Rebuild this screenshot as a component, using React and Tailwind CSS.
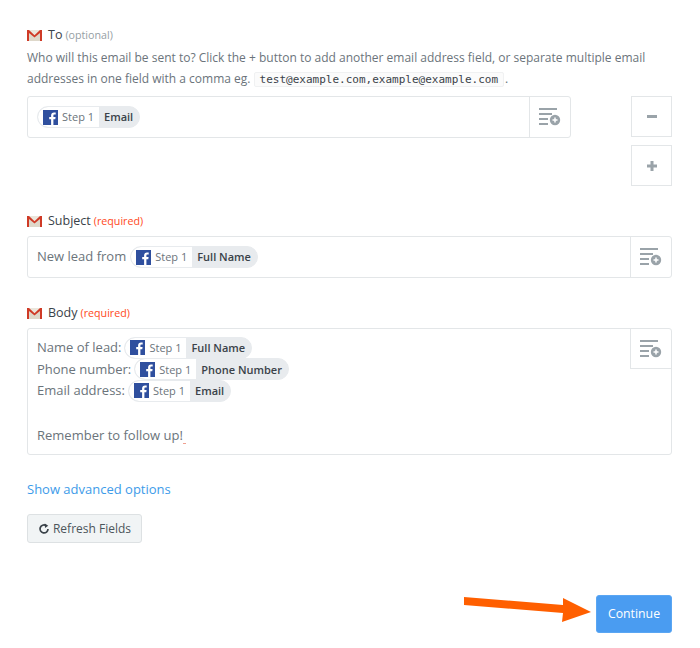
const GmailIcon = () => (
  <svg width="15" height="11" viewBox="0 0 15 11" className="shrink-0">
    <rect x="0" y="0" width="15" height="11" fill="#ebe6dc" />
    <path d="M2 3 L7.5 7.5 L13 3 V11 H2 Z" fill="#ded8ca" />
    <path d="M0 0 H2 L7.5 5.2 L13 0 H15 V11 H13 V3 L7.5 7.5 L2 3 V11 H0 Z" fill="#cf3a26" />
  </svg>
);

const FbIcon = () => (
  <svg width="15" height="15" viewBox="0 0 15 15" className="shrink-0">
    <rect width="15" height="15" fill="#2f4f9e" />
    <path d="M10.4 15 V9.2 H12.3 L12.6 7 H10.4 V5.6 C10.4 5 10.6 4.5 11.5 4.5 H12.7 V2.5 C12.4 2.5 11.8 2.4 11 2.4 C9.3 2.4 8.1 3.4 8.1 5.3 V7 H6.2 V9.2 H8.1 V15 Z" fill="#ffffff" />
  </svg>
);

const Pill = ({ name }) => (
  <span className="inline-flex items-center h-[22px] rounded-full bg-[#e8ebee] border border-[#e8ebee] overflow-hidden">
    <span className="flex items-center h-full bg-white rounded-l-full pl-[5px] pr-[5px] gap-[4px]">
      <FbIcon />
      <span className="text-[11px] text-[#6b747b]">Step 1</span>
    </span>
    <span className="pl-[5px] pr-[6px] text-[11px] font-semibold text-[#3a4249]">{name}</span>
  </span>
);

const InsertIcon = () => (
  <svg width="22" height="18" viewBox="0 0 22 18">
    <g fill="#9aa3a9">
      <rect x="0" y="0" width="18" height="2" />
      <rect x="0" y="5" width="13" height="2" />
      <rect x="0" y="10" width="9" height="2" />
      <rect x="0" y="15" width="9" height="2" />
      <circle cx="16" cy="12" r="5.2" />
    </g>
    <path d="M13.5 12 H18.5 M16 9.5 V14.5" stroke="#ffffff" strokeWidth="1.5" />
  </svg>
);

const Label = ({ title, note, red }) => (
  <div className="flex items-center h-5">
    <GmailIcon />
    <span className="ml-[6px] text-[12.5px] font-medium text-[#3a4249]">{title}</span>
    <span className={`ml-[3px] text-[10.7px] ${red ? "text-[#ff4a1c]" : "text-[#969ea4]"}`}>{note}</span>
  </div>
);

const InsertCell = ({ tall }) => (
  <div className={`w-[41px] shrink-0 flex justify-center border-l border-[#e3e6e8] ${tall ? "h-10 items-center border-b" : "items-center"}`}>
    <InsertIcon />
  </div>
);

const Code = ({ children }) => (
  <code className="font-['DejaVu_Sans_Mono',monospace] text-[11px] text-[#3a4249] border border-[#f0f1f2] bg-[#fbfbfb] px-[5px] rounded-[2px] mr-px">
    {children}
  </code>
);

const SquareButton = ({ children }) => (
  <button className="w-[41px] h-[41px] border border-[#e3e6e8] flex items-center justify-center">
    {children}
  </button>
);

export default function App() {
  return (
    <div className="w-[700px] h-[648px] bg-white font-['Open_Sans',sans-serif] text-[13px] text-[#6b747b] pl-[27px] pr-[28px] pt-[25px]">
      <Label title="To" note="(optional)" />
      <p className="mt-[2px] leading-[21px] text-[12px] w-[645px]">
        Who will this email be sent to? Click the + button to add another email address field, or separate multiple email addresses in one field with a comma eg. <Code>test@example.com,example@example.com</Code>.
      </p>
      <div className="flex mt-[6px]">
        <div className="w-[544px] h-[42px] border border-[#e3e6e8] rounded-[3px] flex">
          <div className="flex-1 flex items-center pl-[9px]">
            <Pill name="Email" />
          </div>
          <InsertCell />
        </div>
        <div className="ml-auto flex flex-col gap-2">
          <SquareButton>
            <span className="w-[10px] h-[3px] bg-[#9aa3a9]" />
          </SquareButton>
          <SquareButton>
            <svg width="10" height="10" viewBox="0 0 10 10"><path d="M0 5 H10 M5 0 V10" stroke="#9aa3a9" strokeWidth="3" /></svg>
          </SquareButton>
        </div>
      </div>

      <div className="mt-[25px]">
        <Label title="Subject" note="(required)" red />
      </div>
      <div className="mt-[5px] h-[42px] border border-[#e3e6e8] rounded-[3px] flex">
        <div className="flex-1 flex items-center pl-[9px] gap-[4px]">
          New lead from <Pill name="Full Name" />
        </div>
        <InsertCell />
      </div>

      <div className="mt-[25px]">
        <Label title="Body" note="(required)" red />
      </div>
      <div className="mt-[5px] h-[127px] border border-[#e3e6e8] rounded-[3px] flex">
        <div className="flex-1 pl-[9px] pt-[8px] leading-[21.5px]">
          <div className="flex items-center gap-[3px] h-[21.5px]">Name of lead: <Pill name="Full Name" /></div>
          <div className="flex items-center gap-[3px] h-[21.5px]">Phone number: <Pill name="Phone Number" /></div>
          <div className="flex items-center gap-[3px] h-[21.5px]">Email address: <Pill name="Email" /></div>
          <div className="h-[23.5px]" />
          <div className="h-[21.5px] relative w-fit">
            Remember to follow up!
            <span className="absolute left-full bottom-[3px] w-[3px] h-px bg-[#f0a090]" />
          </div>
        </div>
        <InsertCell tall />
      </div>

      <a className="block mt-[24px] text-[#3d9be9] leading-5">Show advanced options</a>

      <button className="mt-[15px] flex items-center gap-[3px] w-[115px] h-[29px] justify-center bg-[#f1f4f5] border border-[#dde1e3] rounded-[3px] text-[12px] text-[#4c555b]">
        <svg width="12" height="12" viewBox="0 0 24 24" fill="none" stroke="#3a4249" strokeWidth="3.4">
          <path d="M20 12 A8 8 0 1 1 16 5" />
          <path d="M13.5 1 L20.5 5.5 L14 10 Z" fill="#3a4249" stroke="none" />
        </svg>
        Refresh Fields
      </button>

      <div className="relative flex justify-end mt-[52px]">
        <svg width="133" height="34" viewBox="0 0 133 34" className="absolute left-[437px] top-[1px]">
          <path d="M0 1 L99 9 L99 2 L127 16 L98 26 L99 17 L0 9 Z" fill="#ff5f00" />
        </svg>
        <button className="w-[76px] h-[38px] bg-[#4a9cf1] border border-[#5aa6f3] rounded-[3px] text-white font-medium text-[12.3px]">
          Continue
        </button>
      </div>
    </div>
  );
}
